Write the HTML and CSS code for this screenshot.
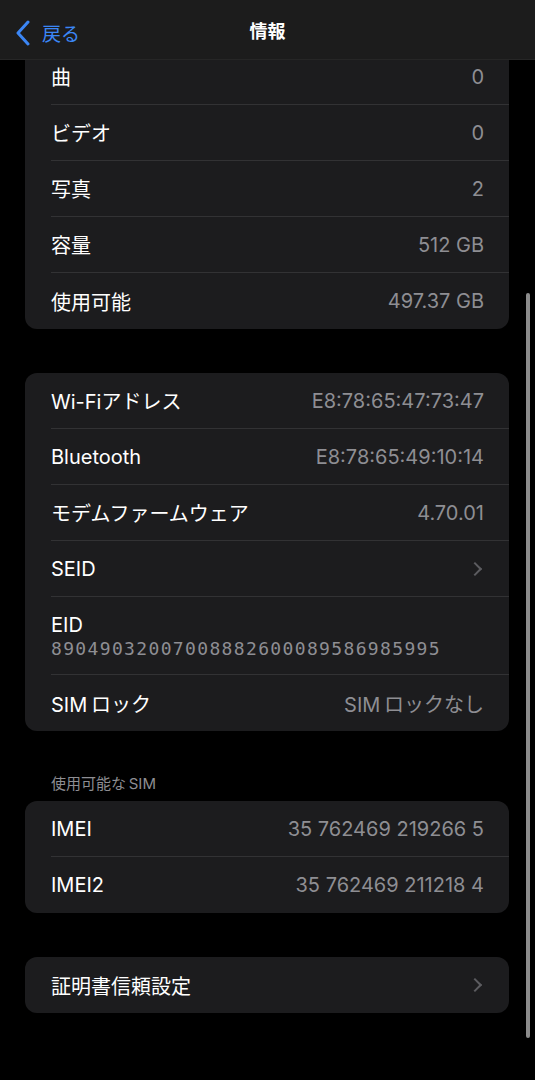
FILE: index.html
```html
<!DOCTYPE html>
<html lang="ja">
<head>
<meta charset="utf-8" />
<title>情報</title>
<link rel="stylesheet" href="styles.css">
</head>
<body>
<div class="nav">
    <a class="back">
        <svg width="16" height="26" viewBox="0 0 16 26"><path d="M13 2 L3 13 L13 24" fill="none" stroke="#3b86f5" stroke-width="3" stroke-linecap="round" stroke-linejoin="round"/></svg>
        <span>戻る</span>
    </a>
    <div class="title">情報</div>
</div>

<div class="page">
    <ul class="group first">
        <li><span class="label">曲</span><span class="value">0</span></li>
        <li><span class="label">ビデオ</span><span class="value">0</span></li>
        <li><span class="label">写真</span><span class="value">2</span></li>
        <li><span class="label">容量</span><span class="value">512 GB</span></li>
        <li><span class="label">使用可能</span><span class="value">497.37 GB</span></li>
    </ul>

    <ul class="group">
        <li><span class="label">Wi-Fiアドレス</span><span class="value">E8:78:65:47:73:47</span></li>
        <li><span class="label">Bluetooth</span><span class="value">E8:78:65:49:10:14</span></li>
        <li><span class="label">モデムファームウェア</span><span class="value">4.70.01</span></li>
        <li><span class="label">SEID</span><span class="chev"></span></li>
        <li class="tall"><span class="label">EID</span><span class="mono">89049032007008882600089586985995</span></li>
        <li><span class="label">SIM&#8201;ロック</span><span class="value">SIM&#8201;ロックなし</span></li>
    </ul>

    <div class="header">使用可能な&#8201;SIM</div>
    <ul class="group sim">
        <li><span class="label">IMEI</span><span class="value">35 762469 219266 5</span></li>
        <li><span class="label">IMEI2</span><span class="value">35 762469 211218 4</span></li>
    </ul>

    <ul class="group">
        <li><span class="label">証明書信頼設定</span><span class="chev"></span></li>
    </ul>
</div>

<div class="scrollbar"></div>
</body>
</html>
```

FILE: styles.css
```css
*{ padding:0; margin:0; list-style:none; border:0; box-sizing:border-box;}
body{
  background:#000;
  font-family:Inter, "Noto Sans CJK JP", sans-serif;
  color:#fff;
  width:535px;
  height:1080px;
  overflow:hidden;
}
.nav{
  position:fixed;
  top:0; left:0; right:0;
  height:60px;
  background:#1c1c1c;
  border-bottom:1px solid #262626;
  z-index:2;
}
.back{
  position:absolute;
  left:15px; top:19px;
  display:flex;
  align-items:center;
  gap:11px;
  color:#3b86f5;
  font-size:19px;
}
.title{
  text-align:center;
  padding-top:20px;
  line-height:24px;
  font-size:18px;
  font-weight:700;
}
.page{
  padding:49px 26px 0 25px;
}
.group{
  background:#1c1c1e;
  border-radius:12px;
  margin-bottom:44px;
  overflow:hidden;
}
.group.first{ border-top-left-radius:0; border-top-right-radius:0;}
.group li{
  height:56px;
  margin-left:26px;
  padding-right:25px;
  display:flex;
  align-items:center;
  justify-content:space-between;
  border-bottom:1px solid #323234;
  font-size:20px;
}
.group li:last-child{ border-bottom:0;}
.group li.tall{
  height:78px;
  flex-direction:column;
  align-items:flex-start;
  justify-content:center;
  gap:1px;
}
.value{ color:#8e8e93;}
.mono{
  font-family:"DejaVu Sans Mono", monospace;
  font-size:18px;
  letter-spacing:1.35px;
  color:#8e8e93;
}
.chev{
  width:10px; height:10px;
  border-top:2px solid #5c5c60;
  border-right:2px solid #5c5c60;
  transform:rotate(45deg);
  margin-right:4px;
}
.header{
  margin:8px 0 8px 26px;
  font-size:15px;
  color:#8e8e93;
  line-height:18px;
}
.scrollbar{
  position:fixed;
  left:526px; top:293px;
  width:4px; height:745px;
  border-radius:2px;
  background:#8c8c8c;
}
```
